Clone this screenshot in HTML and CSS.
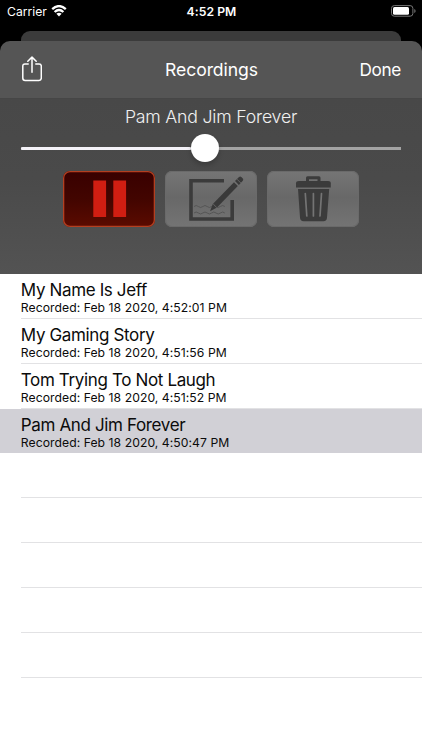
FILE: index.html
```
<!DOCTYPE html>
<html lang="en">
<head>
<meta charset="utf-8">
<title>Recordings</title>
<link rel="stylesheet" href="styles.css">
</head>
<body>
<div class="phone">
  <header class="status">
    <div class="carrier"><span>Carrier</span>
      <svg class="wifi" width="16" height="12" viewBox="0 0 16 12" fill="none" stroke="#fff" stroke-width="2.3"><path d="M1.2 4.2Q8-2 14.8 4.2M3.6 7Q8 3 12.4 7"/><path d="M5.4 8.7Q8 6.6 10.6 8.7L8 11.4Z" fill="#fff" stroke="none"/></svg>
    </div>
    <span class="time">4:52 PM</span>
    <svg class="battery" width="25" height="12" viewBox="0 0 25 12"><rect x=".5" y=".6" width="21.4" height="10.6" rx="2.8" fill="none" stroke="#777"/><rect x="2" y="2" width="16" height="7.8" rx="1.5" fill="#fff"/><path d="M23.3 4v4q1.3-.6 1.3-2t-1.3-2" fill="#777"/></svg>
  </header>
  <div class="back-card"></div>
  <main class="sheet">
    <nav class="navbar">
      <svg class="share" width="20" height="26" viewBox="0 0 20 26" fill="none" stroke="#fff" stroke-width="1.5" stroke-linecap="round" stroke-linejoin="round"><path d="M6.2 8H3Q.8 8 .8 10.2V22Q.8 24.5 3.2 24.5H17Q19.3 24.5 19.3 22V10.2Q19.3 8 17 8H13.8M10 16.2V1.2M5.8 5.2L10 1.1L14.2 5.2"/></svg>
      <h1>Recordings</h1>
      <span class="done">Done</span>
    </nav>
    <section class="player">
      <h2>Pam And Jim Forever</h2>
      <div class="slider"><div class="played"></div><div class="thumb"></div></div>
      <div class="controls">
        <button class="control pause" aria-label="Pause"><svg width="92" height="56" viewBox="0 0 92 56" fill="#d01e12"><path d="M30.3 9.5h12.8v36.4H30.3zM50.3 9.5h12.8v36.4H50.3z"/></svg></button>
        <button class="control" aria-label="Edit"><svg width="92" height="56" viewBox="0 0 92 56"><path d="M59 9.8H26V48H67.2V29" fill="none" stroke="#3b3b3b" stroke-width="3.6"/><path d="M29 35.5q2.2-2 4.4 0t4.4 0 4.4 0 4.4 0 4.4 0 4.4 0 4.4 0M29 42q2.2-2 4.4 0t4.4 0 4.4 0 4.4 0 4.4 0 4.4 0 4.4 0" fill="none" stroke="#555" stroke-width="1"/><path d="M45 40.3L47.8 33L69 11.2L72.8 15L52 36.6Z" fill="#393939"/><path d="M70 10.1L74 6Q75.2 4.9 76.4 5.9L77.8 7.4Q78.8 8.6 77.8 9.8L73.9 13.9Z" fill="#393939"/><path d="M72 8.2L75.8 12M48.2 33L51.8 36.6" stroke="#707070" stroke-width=".8"/></svg></button>
        <button class="control" aria-label="Delete"><svg width="92" height="56" viewBox="0 0 92 56"><path d="M40.5 11V6.7H52V11" fill="none" stroke="#3b3b3b" stroke-width="3" stroke-linejoin="round"/><path d="M32 10H61Q63.8 10 63.8 12.4V16.6H29V12.4Q29 10 32 10Z" fill="#3b3b3b"/><path d="M31 18H62.2L60 46.8Q59.8 50.2 56.5 50.2H36.5Q33.3 50.2 33 46.8Z" fill="#3b3b3b"/><path d="M38.3 22.5L39.8 45M46.4 22.5V45M54.5 22.5L53 45" fill="none" stroke="#747474" stroke-width="1.7" stroke-linecap="round"/></svg></button>
      </div>
    </section>
    <ul class="list">
      <li><strong>My Name Is Jeff</strong><small>Recorded: Feb 18 2020, 4:52:01 PM</small></li>
      <li><strong>My Gaming Story</strong><small>Recorded: Feb 18 2020, 4:51:56 PM</small></li>
      <li><strong>Tom Trying To Not Laugh</strong><small>Recorded: Feb 18 2020, 4:51:52 PM</small></li>
      <li class="selected"><strong>Pam And Jim Forever</strong><small>Recorded: Feb 18 2020, 4:50:47 PM</small></li>
      <li></li><li></li><li></li><li></li><li></li>
    </ul>
  </main>
</div>
</body>
</html>
```
FILE: styles.css
```
* { box-sizing: border-box; }
body { margin: 0; background: #000; font-family: Inter, "Liberation Sans", sans-serif; }
.phone { width: 422px; height: 750px; overflow: hidden; display: flex; flex-direction: column; }
.status { height: 31px; flex: none; display: grid; grid-template-columns: 1fr auto 1fr; padding: 0 6px 9px 7px; align-items: center; color: #fff; }
.carrier { display: flex; align-items: center; gap: 4px; font-size: 12.2px; letter-spacing: 0; }
.wifi { margin-top: -1px; }
.time { font-size: 12.2px; font-weight: 600; letter-spacing: .05px; }
.battery { justify-self: end; margin-top: -1px; }
.back-card { height: 20px; flex: none; margin: 0 21px -10px; background: #3b3b3b; border-radius: 9px 9px 0 0; }
.sheet { flex: 1; position: relative; display: flex; flex-direction: column; }
.navbar { height: 58px; flex: none; background: #555; border-radius: 10px 10px 0 0; border-bottom: 1px solid #464646; display: grid; grid-template-columns: 1fr auto 1fr; align-items: center; padding: 0 21px 0 22px; color: #fff; }
.share { margin-top: -2px; }
h1, h2 { margin: 0; font-weight: 400; }
h1 { font-size: 17.6px; line-height: 22px; letter-spacing: -.1px; }
.done { justify-self: end; font-size: 17.2px; letter-spacing: -.35px; }
.player { height: 175px; flex: none; padding: 7px 21px 0; background: linear-gradient(#484848, #4a4a4a 45%, #535353); }
h2 { color: #f0f0f0; font-size: 17.7px; line-height: 22px; font-weight: 300; letter-spacing: -.2px; text-align: center; }
.slider { height: 28px; margin-top: 6px; display: flex; align-items: center; background: linear-gradient(#a3a3a3, #a3a3a3) center / 100% 3px no-repeat; }
.played { width: 169.5px; height: 3px; border-radius: 2px; background: #f4f2f8; }
.thumb { width: 28px; height: 28px; border-radius: 50%; background: #fff; box-shadow: 0 3px 5px #0003; }
.controls { display: flex; justify-content: center; gap: 10px; margin-top: 9px; }
.control { width: 92px; height: 56px; padding: 0; border: 0; border-radius: 7px; background: linear-gradient(#757575, #686868 48%, #747474); box-shadow: inset 0 0 0 1px #6a6a6a; overflow: hidden; }
.control svg { display: block; }
.pause { background: linear-gradient(#380000, #420500 50%, #5b0b00); box-shadow: inset 0 0 0 1.3px #b43f20; }
.list { flex: 1; list-style: none; margin: 0; padding: 0; background: #fff; }
.list li { height: 44.85px; padding: 5px 0 0 20.8px; color: #0b0b0b; background: linear-gradient(#e2e2e4, #e2e2e4) 21px 100% / 100% 1px no-repeat; }
.list .selected { background: #d1d0d6; }
.list strong { display: block; font-size: 17px; line-height: 22px; font-weight: 400; letter-spacing: -.36px; white-space: nowrap; }
.list small { display: block; font-size: 12.2px; line-height: 13px; letter-spacing: .05px; white-space: nowrap; }
```
